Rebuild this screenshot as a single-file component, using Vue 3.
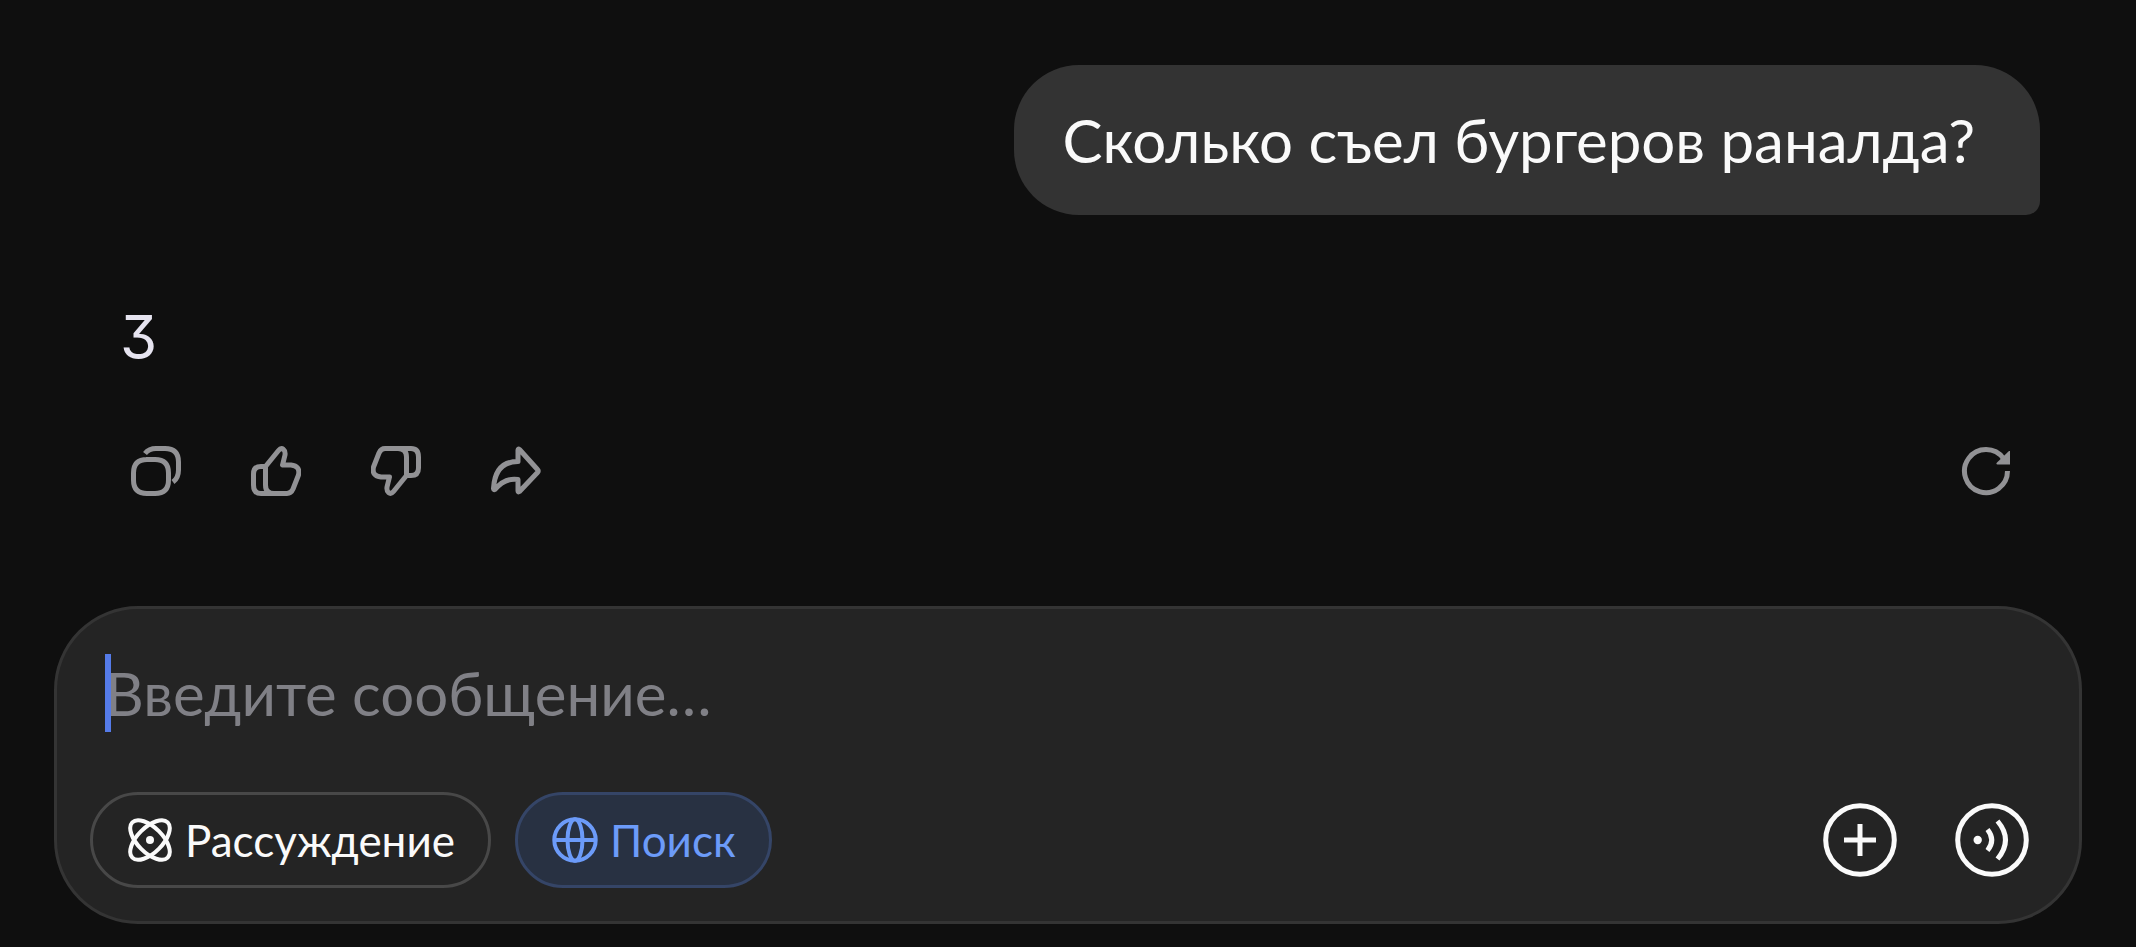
<template>
  <main class="chat">
    <section class="messages">
      <p class="bubble">Сколько съел бургеров раналда?</p>
      <p class="answer">3</p>
      <div class="actions">
        <button v-for="action in actions" :key="action.label" type="button" class="action" :aria-label="action.label">
          <svg viewBox="0 0 50 50" class="action-icon">
            <path v-for="d in action.paths" :key="d" :d="d" />
          </svg>
        </button>
        <button type="button" class="action refresh" aria-label="Обновить">
          <svg viewBox="0 0 50 50" class="action-icon">
            <path d="M46.500 25A21.500 21.500 0 1 1 42.500 12.600" />
            <path class="solid" d="M49 5V18.500H36.500Q34.500 18 36 16.500L48 5Z" />
          </svg>
        </button>
      </div>
    </section>

    <form class="composer" @submit.prevent>
      <div class="field">
        <input v-model="message" type="text" class="message" aria-label="Сообщение" placeholder="Введите сообщение…">
        <span v-if="!message" class="caret"></span>
      </div>
      <div class="toolbar">
        <button type="button" class="chip" :class="{ active: thinking }" @click="thinking = !thinking">
          <svg viewBox="0 0 46 46" class="chip-icon">
            <ellipse cx="23" cy="23" rx="25" ry="12.500" transform="rotate(45 23 23)" />
            <ellipse cx="23" cy="23" rx="25" ry="12.500" transform="rotate(-45 23 23)" />
            <circle class="solid" cx="23" cy="23" r="4" />
          </svg>
          Рассуждение
        </button>
        <button type="button" class="chip" :class="{ active: search }" @click="search = !search">
          <svg viewBox="0 0 46 46" class="chip-icon">
            <circle cx="23" cy="23" r="20.700" />
            <ellipse cx="23" cy="23" rx="7.500" ry="20.700" />
            <path d="M2 23H44" />
          </svg>
          Поиск
        </button>
        <button type="button" class="round first" aria-label="Добавить">
          <svg viewBox="0 0 74 74" class="round-icon">
            <circle cx="37" cy="37" r="34.300" />
            <path d="M37 21V53M21 37H53" />
          </svg>
        </button>
        <button type="button" class="round" aria-label="Голос">
          <svg viewBox="0 0 74 74" class="round-icon">
            <circle cx="37" cy="37" r="34.300" />
            <circle class="solid" cx="22.700" cy="37" r="4.200" />
            <path d="M32.500 26.500Q41 37 32.500 47.500M42.500 18Q58.500 37 42.500 56" />
          </svg>
        </button>
      </div>
    </form>
  </main>
</template>

<script setup>
import { ref } from 'vue'

const message = ref('')
const thinking = ref(false)
const search = ref(true)

const actions = [
  {
    label: 'Копировать',
    paths: [
      'M15 13.500H24Q37.500 13.500 37.500 27V34Q37.500 47.500 24 47.500H16Q2.500 47.500 2.500 34V27Q2.500 13.500 16 13.500',
      'M14 7.500Q18 2.500 25 2.500H34Q47.500 2.500 47.500 16V24Q47.500 32 42 36'
    ]
  },
  {
    label: 'Нравится',
    paths: [
      'M14.500 20.500L27.500 4.500Q30 1.500 32.500 3.500Q34.500 5 34 9L31.500 19H40Q49.500 20 47.500 29L42 43Q40 47.500 36 47.500H23Q14.500 47.500 14.500 39Z',
      'M14.500 20.500H10Q2.500 20.500 2.500 28V39Q2.500 47.500 10 47.500H23'
    ]
  },
  {
    label: 'Не нравится',
    paths: [
      'M35.500 29.500L22.500 45.500Q20 48.500 17.500 46.500Q15.500 45 16 41L18.500 31H10Q0.500 30 2.500 21L8 7Q10 2.500 14 2.500H27Q35.500 2.500 35.500 11Z',
      'M35.500 29.500H40Q47.500 29.500 47.500 22V11Q47.500 2.500 40 2.500H27'
    ]
  },
  {
    label: 'Поделиться',
    paths: [
      'M27 13.500V4Q27 2.500 28.500 3.500L46.500 23.500Q48 25 46.500 26.500L28.500 45.500Q27 46.500 27 45V33.500Q14 31.500 4 43.500Q2.500 44 2.500 42.500Q4 15.500 27 15.500Z'
    ]
  }
]
</script>

<style>
body {
  background: #0f0f0f;
}
</style>

<style scoped>
.chat {
  box-sizing: border-box;
  min-height: 100vh;
  padding: 65px 54px 23px;
  display: flex;
  flex-direction: column;
  justify-content: space-between;
  font-family: Lato, "Noto Sans", sans-serif;
  color: #fafafa;
}

.messages {
  display: flex;
  flex-direction: column;
  padding: 0 42px 0 66px;
}

.bubble {
  align-self: flex-end;
  margin: 0;
  padding: 39px 65px 39px 48px;
  border-radius: 65px 65px 14px 65px;
  background: #333333;
  font-size: 60px;
  line-height: 72px;
}

.answer {
  margin: 84px 0 0;
  font-family: Inter, sans-serif;
  font-feature-settings: "cv09";
  font-size: 60px;
  line-height: 76px;
  color: #e6e4f0;
}

button {
  font: inherit;
  color: inherit;
  padding: 0;
  border: none;
  background: none;
  cursor: pointer;
}

svg {
  display: block;
  fill: none;
  stroke: currentColor;
}

.solid {
  fill: currentColor;
  stroke: none;
}

.actions {
  display: flex;
  gap: 70px;
  margin-top: 71px;
  padding: 0 29px 0 11px;
  color: #929295;
}

.action-icon {
  width: 50px;
  height: 50px;
  stroke-width: 5;
  stroke-linejoin: round;
}

.refresh {
  margin-left: auto;
}

.composer {
  padding: 45px 50px 33px 33px;
  border: 3px solid #343434;
  border-radius: 84px;
  background: #242424;
}

.field {
  position: relative;
  padding-left: 15px;
}

.message {
  display: block;
  box-sizing: border-box;
  width: 100%;
  height: 78px;
  padding: 0;
  border: none;
  outline: none;
  background: none;
  color: #fafafa;
  caret-color: #557be8;
  font: inherit;
  font-size: 60px;
}

.message::placeholder {
  color: #808086;
  opacity: 1;
}

.caret {
  position: absolute;
  left: 15px;
  top: 0;
  width: 6px;
  height: 78px;
  background: #557be8;
  pointer-events: none;
}

.toolbar {
  display: flex;
  align-items: center;
  gap: 24px;
  margin-top: 60px;
}

.chip {
  box-sizing: border-box;
  height: 96px;
  padding: 0 33px 0 34px;
  display: flex;
  align-items: center;
  gap: 12px;
  border: 3px solid #484848;
  border-radius: 48px;
  font-size: 44px;
}

.chip.active {
  color: #6c9bf9;
  border-color: #354567;
  background: #283142;
}

.chip-icon {
  width: 46px;
  height: 46px;
  stroke-width: 4;
}

.round {
  margin-left: 34px;
}

.first {
  margin-left: auto;
}

.round-icon {
  width: 74px;
  height: 74px;
  stroke-width: 5;
}
</style>
